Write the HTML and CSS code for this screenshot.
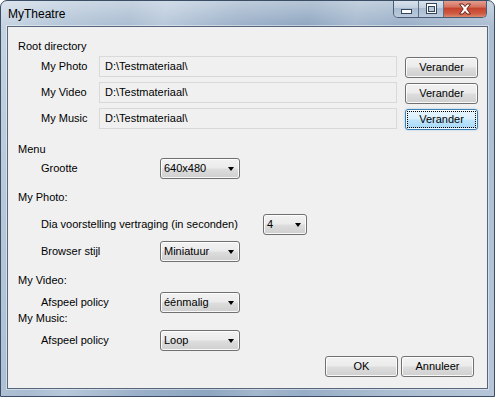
FILE: index.html
```html
<!DOCTYPE html>
<html>
<head>
<meta charset="utf-8">
<link rel="stylesheet" href="styles.css">
</head>
<body>
<div class="titlebar">
  <span class="title">MyTheatre</span>
  <div class="caption-buttons">
    <div class="cb cb-min">
      <svg width="11" height="6" viewBox="0 0 11 6"><rect x="0.5" y="0.5" width="10" height="4" fill="#fff" stroke="#33465e"/></svg>
    </div>
    <div class="cb cb-max">
      <svg width="11" height="11" viewBox="0 0 11 11"><rect x="0.5" y="0.5" width="10" height="10" fill="#fff" stroke="#33465e"/><rect x="2.5" y="3.5" width="6" height="5" fill="#b9c9da" stroke="#33465e"/></svg>
    </div>
    <div class="cb cb-close">
      <svg width="14" height="12" viewBox="0 0 14 12"><path d="M1.5 1 L5 1 L7 3.6 L9 1 L12.5 1 L8.8 6 L12.5 11 L9 11 L7 8.4 L5 11 L1.5 11 L5.2 6 Z" fill="#fff" stroke="#6b2118" stroke-width="1" stroke-linejoin="round"/></svg>
    </div>
  </div>
</div>
<div class="client">
  <div class="heading">Root directory</div>
  <div class="row row-path m3">
    <span class="label lbl-path">My Photo</span>
    <div class="field">D:\Testmateriaal\</div>
    <button class="btn btn-change">Verander</button>
  </div>
  <div class="row row-path m4">
    <span class="label lbl-path">My Video</span>
    <div class="field">D:\Testmateriaal\</div>
    <button class="btn btn-change">Verander</button>
  </div>
  <div class="row row-path m4">
    <span class="label lbl-path">My Music</span>
    <div class="field">D:\Testmateriaal\</div>
    <button class="btn btn-change btn-focus"><span class="focus-ring">Verander</span></button>
  </div>

  <div class="heading m13">Menu</div>
  <div class="row m2">
    <span class="label lbl-combo">Grootte</span>
    <div class="combo">640x480<span class="arrow"></span></div>
  </div>

  <div class="heading m12">My Photo:</div>
  <div class="row m10">
    <span class="label lbl-wide">Dia voorstelling vertraging (in seconden)</span>
    <div class="combo combo-small">4<span class="arrow"></span></div>
  </div>
  <div class="row m6">
    <span class="label lbl-combo">Browser stijl</span>
    <div class="combo">Miniatuur<span class="arrow"></span></div>
  </div>

  <div class="heading m12">My Video:</div>
  <div class="row m5">
    <span class="label lbl-combo">Afspeel policy</span>
    <div class="combo">éénmalig<span class="arrow"></span></div>
  </div>
  <div class="heading mneg1">My Music:</div>
  <div class="row m5">
    <span class="label lbl-combo">Afspeel policy</span>
    <div class="combo">Loop<span class="arrow"></span></div>
  </div>

  <div class="footer">
    <button class="btn btn-footer">OK</button>
    <button class="btn btn-footer">Annuleer</button>
  </div>
</div>
</body>
</html>
```
FILE: styles.css
```css
html {
  margin: 0;
  background: #ffffff;
}
body {
  margin: 0;
  width: 495px;
  height: 397px;
  box-sizing: border-box;
  border: 1px solid #3b4e66;
  border-radius: 7px 7px 0 0;
  padding: 0 6px 7px 6px;
  display: flex;
  flex-direction: column;
  overflow: hidden;
  font-family: "Liberation Sans", Arial, sans-serif;
  font-size: 11px;
  color: #000;
  background:
    linear-gradient(180deg, rgba(255,255,255,0.35) 0px, rgba(255,255,255,0) 26px),
    linear-gradient(105deg, #c8d5e3 0%, #b6c7d9 10%, #a9bcd1 22%, #b7c8da 28%, #9cb1c9 40%, #8ea6c0 52%, #a3b7cd 60%, #98aec7 68%, #abbdd1 82%, #b6c6d8 100%);
}
.titlebar {
  height: 25px;
  flex: none;
  display: flex;
  align-items: flex-start;
}
.title {
  font-family: "Liberation Sans", Arial, sans-serif;
  font-size: 12px;
  line-height: 15px;
  margin-top: 6px;
  margin-left: 1px;
  color: #000;
}
.caption-buttons {
  margin-left: auto;
  margin-right: 1px;
  margin-top: -1px;
  display: flex;
  height: 18px;
  border: 1px solid #4a5d76;
  border-top: none;
  border-radius: 0 0 5px 5px;
  overflow: hidden;
  box-sizing: border-box;
}
.cb {
  display: flex;
  align-items: center;
  justify-content: center;
  height: 100%;
}
.cb-min {
  width: 25px;
  border-right: 1px solid #5c6f88;
  align-items: flex-end;
  padding-bottom: 2px;
  box-sizing: border-box;
  background: linear-gradient(180deg, #dce5ef 0%, #c3d1e0 45%, #a9bcd1 50%, #bccbdc 100%);
}
.cb-max {
  width: 24px;
  border-right: 1px solid #5c6f88;
  background: linear-gradient(180deg, #dce5ef 0%, #c3d1e0 45%, #a9bcd1 50%, #bccbdc 100%);
}
.cb-close {
  width: 42px;
  background: linear-gradient(180deg, #e6a597 0%, #d4725f 40%, #c5442f 50%, #cf5b43 80%, #dc8a6f 100%);
}
.client {
  flex: 1;
  border: 1px solid #56677d;
  background: #f0f0f0;
  padding: 13px 0 0 10px;
  display: flex;
  flex-direction: column;
  box-shadow: 0 0 0 1px rgba(255,255,255,0.45);
}
.heading {
  height: 13px;
  line-height: 13px;
  white-space: nowrap;
}
.row {
  display: flex;
  align-items: center;
  height: 21px;
  padding-left: 23px;
}
.row-path {
  height: 22px;
  align-items: flex-start;
}
.label {
  white-space: nowrap;
  line-height: 13px;
}
.lbl-path {
  width: 58px;
  margin-top: 4px;
}
.lbl-combo {
  width: 119px;
}
.lbl-wide {
  width: 222px;
}
.field {
  width: 298px;
  height: 21px;
  box-sizing: border-box;
  border: 1px solid #d9d9d9;
  background: #f0f0f0;
  padding-left: 5px;
  line-height: 19px;
  font-size: 11px;
}
.btn {
  font-family: "Liberation Sans", Arial, sans-serif;
  font-size: 11px;
  color: #000;
  height: 21px;
  box-sizing: border-box;
  border: 1px solid #707070;
  border-radius: 3px;
  padding: 0;
  background: linear-gradient(180deg, #f2f2f2 0%, #ebebeb 48%, #dddddd 52%, #cfcfcf 100%);
  box-shadow: inset 0 0 0 1px rgba(255,255,255,0.85);
  text-align: center;
  line-height: 19px;
}
.btn-change {
  width: 73px;
  margin-left: 8px;
  margin-top: 1px;
}
.btn-focus {
  border-color: #3c7fb1;
  background: linear-gradient(180deg, #eaf6fd 0%, #d9f0fc 48%, #bee6fd 52%, #a7d9f5 100%);
  box-shadow: inset 0 0 0 1px rgba(255,255,255,0.8), 0 0 2px rgba(60,150,220,0.5);
  padding: 2px;
}
.focus-ring {
  display: block;
  height: 15px;
  line-height: 15px;
  outline: 1px dotted #000;
}
.combo {
  position: relative;
  width: 80px;
  height: 21px;
  box-sizing: border-box;
  border: 1px solid #707070;
  border-radius: 3px;
  background: linear-gradient(180deg, #f2f2f2 0%, #ebebeb 48%, #dddddd 52%, #cfcfcf 100%);
  box-shadow: inset 0 0 0 1px rgba(255,255,255,0.85);
  padding-left: 3px;
  line-height: 19px;
  white-space: nowrap;
}
.combo-small {
  width: 44px;
}
.arrow {
  position: absolute;
  right: 5px;
  top: 8px;
  width: 0;
  height: 0;
  border-left: 3.5px solid transparent;
  border-right: 3.5px solid transparent;
  border-top: 4px solid #000;
}
.footer {
  display: flex;
  justify-content: flex-end;
  gap: 3px;
  margin-top: 5px;
  padding-right: 13px;
}
.btn-footer {
  width: 73px;
}
.m2 { margin-top: 2px; }
.m3 { margin-top: 3px; }
.m4 { margin-top: 4px; }
.m5 { margin-top: 5px; }
.m6 { margin-top: 6px; }
.m10 { margin-top: 10px; }
.m12 { margin-top: 12px; }
.m13 { margin-top: 13px; }
.mneg1 { margin-top: -1px; }
```
